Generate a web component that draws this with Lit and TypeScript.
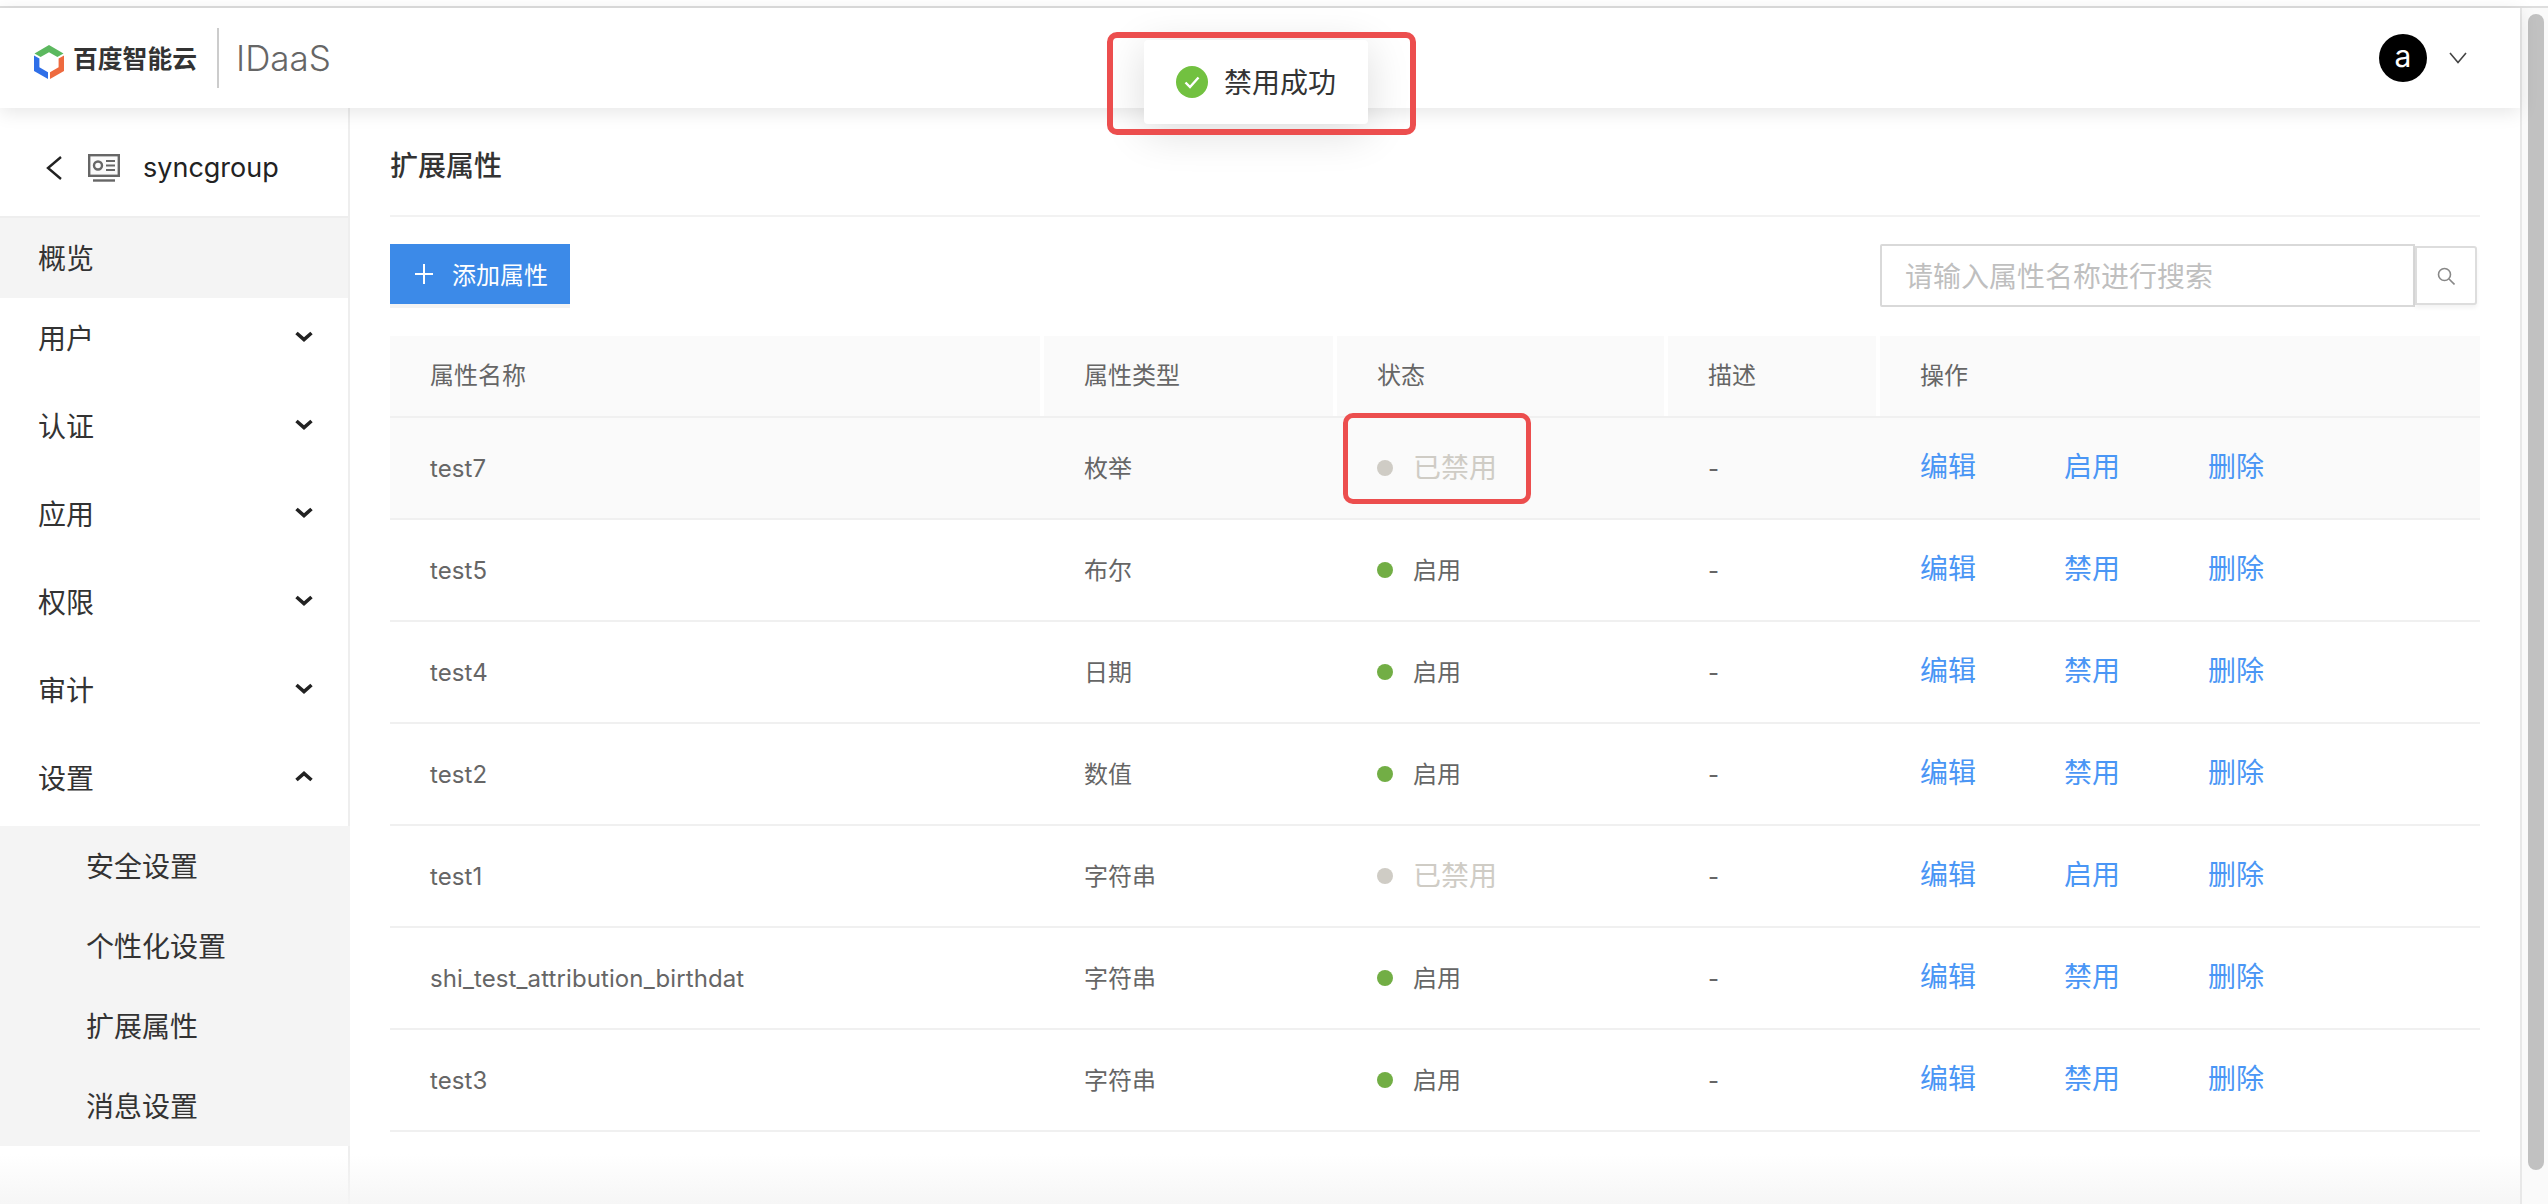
import { LitElement, css, html, svg } from 'lit';
import { customElement } from 'lit/decorators.js';

interface AttrRow {
  name: string;
  type: string;
  enabled: boolean;
}

const ROWS: AttrRow[] = [
  { name: 'test7', type: '枚举', enabled: false },
  { name: 'test5', type: '布尔', enabled: true },
  { name: 'test4', type: '日期', enabled: true },
  { name: 'test2', type: '数值', enabled: true },
  { name: 'test1', type: '字符串', enabled: false },
  { name: 'shi_test_attribution_birthdat', type: '字符串', enabled: true },
  { name: 'test3', type: '字符串', enabled: true }
];

const MENU = ['用户', '认证', '应用', '权限', '审计'];
const SUB_MENU = ['安全设置', '个性化设置', '扩展属性', '消息设置'];

const chevron = (up: boolean) => html`
  <svg class="menu-chevron" viewBox="0 0 18 11" width="18" height="11">
    <path d=${up ? 'M1.5 9L9 2.5L16.5 9' : 'M1.5 2L9 8.5L16.5 2'} fill="none" stroke="#222" stroke-width="3.6" />
  </svg>
`;

const logoMark = svg`
  <path d="M15 0L29.5 8.4L23.4 12L15 7.2L6.6 12L.5 8.4Z" fill="#5cb85f" />
  <path d="M0 10.4L5.4 13.4V22.2L14 27.2V34L0 26Z" fill="#2f6fe8" />
  <path d="M30 10.4L24.6 13.4V22.2L16 27.2V34L30 26Z" fill="#ee6a3f" />
`;

@customElement('app-root')
export class AppRoot extends LitElement {
  public static override styles = css`
    :host {
      display: block;
      position: relative;
      height: 1204px;
      overflow: hidden;
      background: #fff;
      color: #333;
      font-family: Inter, 'Noto Sans CJK SC', sans-serif;
    }

    .top-strip {
      height: 6px;
      border-bottom: 2px solid #dedede;
      background: #fff;
    }

    .page {
      display: flex;
      height: 1196px;
    }

    .window {
      flex: 1;
      min-width: 0;
      display: flex;
      flex-direction: column;
    }

    .scrollbar {
      flex: none;
      width: 28px;
      box-sizing: border-box;
      padding: 6px 4px 0 6px;
      border-left: 2px solid #e8e8e8;
      background: #fafafa;
    }

    .scrollbar-thumb {
      height: 1156px;
      border-radius: 8px;
      background: #c1c1c1;
    }

    .header {
      position: relative;
      z-index: 2;
      flex: none;
      height: 100px;
      display: flex;
      align-items: center;
      padding: 0 53px 0 34px;
      background: #fff;
      box-shadow: 0 4px 18px rgba(0, 0, 0, 0.1);
    }

    .logo-mark {
      flex: none;
      margin-top: 8px;
    }

    .logo-text {
      margin-left: 9px;
      padding-bottom: 3px;
      font-size: 24.8px;
      font-weight: 700;
      color: #333;
      white-space: nowrap;
    }

    .logo-divider {
      width: 2px;
      height: 60px;
      margin: 0 17px 0 20px;
      background: #ccc;
    }

    .product {
      font-size: 35px;
      font-weight: 300;
      color: #666;
    }

    .spacer {
      flex: 1;
    }

    .avatar {
      width: 48px;
      height: 48px;
      border-radius: 50%;
      background: #000;
      color: #fff;
      font-size: 30px;
      line-height: 44px;
      text-align: center;
    }

    .user-chevron {
      margin-left: 22px;
    }

    .body {
      flex: 1;
      min-height: 0;
      display: flex;
    }

    .sidebar {
      flex: none;
      width: 348px;
      border-right: 2px solid #eee;
    }

    .side-head {
      height: 108px;
      box-sizing: content-box;
      display: flex;
      align-items: center;
      padding-left: 46px;
      border-bottom: 2px solid #eee;
      font-size: 27px;
      color: #222;
    }

    .side-head svg {
      margin-top: 12px;
    }

    .side-head .card {
      margin-left: 26px;
    }

    .side-head span {
      margin-left: 23px;
      margin-top: 10px;
    }

    .menu-item {
      height: 80px;
      box-sizing: border-box;
      display: flex;
      align-items: center;
      justify-content: space-between;
      padding: 0 35px 3px 38px;
      margin-bottom: 8px;
      font-size: 28px;
      color: #333;
    }

    .menu-item.active {
      margin-bottom: 0;
      background: #f4f4f4;
    }

    .sub-menu {
      width: 350px;
      background: #f4f4f4;
    }

    .sub-item {
      height: 80px;
      box-sizing: border-box;
      display: flex;
      align-items: center;
      padding: 0 0 3px 86px;
      font-size: 28px;
      color: #333;
    }

    .main {
      flex: 1;
      min-width: 0;
      padding: 0 40px;
    }

    .title {
      height: 107px;
      box-sizing: content-box;
      display: flex;
      align-items: center;
      border-bottom: 2px solid #f2f2f2;
      font-size: 28px;
      font-weight: 500;
      color: #333;
    }

    .title span {
      margin-top: 5px;
    }

    .toolbar {
      height: 92px;
      margin-top: 27px;
      display: flex;
      align-items: flex-start;
      justify-content: space-between;
    }

    .add-btn {
      width: 180px;
      height: 60px;
      display: flex;
      align-items: center;
      gap: 19px;
      padding: 0 0 1px 25px;
      box-sizing: border-box;
      border: 0;
      background: #3c8ae8;
      box-shadow: 0 4px 0 #f3f3f3;
      color: #fff;
      font-family: inherit;
      font-size: 24px;
    }

    .add-btn svg {
      margin-top: 1px;
    }

    .search {
      display: flex;
      align-items: center;
      margin-right: 3px;
    }

    .search input {
      width: 535px;
      height: 63px;
      box-sizing: border-box;
      padding: 2px 23px 0;
      border: 2px solid #d9d9d9;
      border-radius: 2px 0 0 2px;
      outline: none;
      font-family: inherit;
      font-size: 28px;
      color: #333;
    }

    .search input::placeholder {
      color: #bfbfbf;
      opacity: 1;
    }

    .search-btn {
      width: 62px;
      height: 59px;
      display: flex;
      align-items: center;
      justify-content: center;
      padding: 0;
      box-sizing: border-box;
      border: 2px solid #ddd;
      border-radius: 0 3px 3px 0;
      background: #fff;
      box-shadow: 0 3px 4px rgba(0, 0, 0, 0.05);
    }

    table {
      width: 100%;
      table-layout: fixed;
      border-collapse: separate;
      border-spacing: 0;
    }

    .c-name {
      width: 654px;
    }
    .c-type {
      width: 293px;
    }
    .c-status {
      width: 331px;
    }
    .c-desc {
      width: 212px;
    }

    th {
      height: 82px;
      box-sizing: border-box;
      padding: 0 0 5px 40px;
      border-bottom: 2px solid #f0f0f0;
      background: #fafafa;
      box-shadow: inset -4px 0 0 #fff;
      font-size: 24px;
      font-weight: 400;
      color: #666;
      text-align: left;
    }

    th:last-child {
      box-shadow: none;
    }

    td {
      height: 102px;
      box-sizing: border-box;
      padding: 0 0 0 40px;
      border-bottom: 2px solid #f0f0f0;
      font-size: 24px;
      color: #666;
    }

    td.name {
      letter-spacing: 0.1px;
    }

    td.type {
      padding-bottom: 3px;
    }

    tr.muted td {
      background: #fafafa;
    }

    .status {
      display: flex;
      align-items: center;
      gap: 20px;
      margin-top: -4px;
    }

    .dot {
      flex: none;
      width: 16px;
      height: 16px;
      margin-top: 4px;
      border-radius: 50%;
      background: #72ae45;
    }

    .status.off {
      font-size: 28px;
      color: #cfccc5;
    }

    .status.off .dot {
      background: #cfccc5;
    }

    .actions {
      display: flex;
      gap: 88px;
      margin-top: -6px;
      font-size: 28px;
      color: #4a96f5;
    }

    .fade {
      position: absolute;
      left: 0;
      right: 28px;
      bottom: 0;
      height: 50px;
      background: linear-gradient(rgba(245, 245, 245, 0), rgba(245, 245, 245, 0.9));
      pointer-events: none;
    }

    .toast {
      position: absolute;
      z-index: 3;
      left: 1144px;
      top: 40px;
      width: 224px;
      height: 84px;
      box-sizing: border-box;
      display: flex;
      align-items: center;
      gap: 16px;
      padding: 0 0 3px 32px;
      border-radius: 4px;
      background: #fff;
      box-shadow: 0 8px 44px rgba(0, 0, 0, 0.14);
      font-size: 28px;
      color: #333;
    }

    .toast svg {
      margin-top: 3px;
    }

    .mark {
      position: absolute;
      z-index: 4;
      box-sizing: border-box;
      border: 6px solid #ec4e4e;
      border-radius: 10px;
    }

    .mark-toast {
      left: 1107px;
      top: 32px;
      width: 309px;
      height: 103px;
    }

    .mark-status {
      left: 1343px;
      top: 413px;
      width: 188px;
      height: 91px;
      border-width: 5px;
    }
  `;

  private renderRow(row: AttrRow, index: number) {
    return html`
      <tr class=${index === 0 ? 'muted' : ''}>
        <td class="name">${row.name}</td>
        <td class="type">${row.type}</td>
        <td>
          <div class="status ${row.enabled ? '' : 'off'}">
            <i class="dot"></i>${row.enabled ? '启用' : '已禁用'}
          </div>
        </td>
        <td>-</td>
        <td>
          <div class="actions">
            <span>编辑</span><span>${row.enabled ? '禁用' : '启用'}</span><span>删除</span>
          </div>
        </td>
      </tr>
    `;
  }

  public override render() {
    return html`
      <div class="top-strip"></div>
      <div class="page">
        <div class="window">
          <header class="header">
            <svg class="logo-mark" viewBox="0 0 30 34" width="30" height="34">${logoMark}</svg>
            <span class="logo-text">百度智能云</span>
            <i class="logo-divider"></i>
            <span class="product">IDaaS</span>
            <div class="spacer"></div>
            <div class="avatar">a</div>
            <svg class="user-chevron" viewBox="0 0 18 12" width="18" height="12">
              <path d="M1 1L9 10.5L17 1" fill="none" stroke="#444" stroke-width="1.6" />
            </svg>
          </header>
          <div class="body">
            <aside class="sidebar">
              <div class="side-head">
                <svg viewBox="0 0 16 24" width="16" height="24">
                  <path d="M15 1L2 12L15 23" fill="none" stroke="#222" stroke-width="2.4" />
                </svg>
                <svg class="card" viewBox="0 0 32 28" width="32" height="28">
                  <rect x="1.2" y="1.2" width="29.6" height="20.6" fill="#fafafa" stroke="#666" stroke-width="2.4" />
                  <circle cx="10" cy="11.5" r="4" fill="none" stroke="#666" stroke-width="2.4" />
                  <path d="M18 7H27M18 11.5H27M18 16H27" stroke="#666" stroke-width="2.2" />
                  <path d="M5 26.5H27" stroke="#666" stroke-width="2.4" />
                </svg>
                <span>syncgroup</span>
              </div>
              <div class="menu-item active">概览</div>
              ${MENU.map(item => html`<div class="menu-item">${item}${chevron(false)}</div>`)}
              <div class="menu-item">设置${chevron(true)}</div>
              <div class="sub-menu">
                ${SUB_MENU.map(item => html`<div class="sub-item">${item}</div>`)}
              </div>
            </aside>
            <main class="main">
              <div class="title"><span>扩展属性</span></div>
              <div class="toolbar">
                <button class="add-btn">
                  <svg viewBox="0 0 18 20" width="18" height="20">
                    <path d="M9 0V20M0 10H18" stroke="#fff" stroke-width="2" />
                  </svg>
                  添加属性
                </button>
                <div class="search">
                  <input placeholder="请输入属性名称进行搜索" />
                  <button class="search-btn">
                    <svg viewBox="0 0 18 18" width="18" height="18">
                      <circle cx="7.5" cy="7.5" r="6" fill="none" stroke="#888" stroke-width="1.6" />
                      <path d="M12 12L17.5 17.5" stroke="#888" stroke-width="1.6" />
                    </svg>
                  </button>
                </div>
              </div>
              <table>
                <thead>
                  <tr>
                    <th class="c-name">属性名称</th>
                    <th class="c-type">属性类型</th>
                    <th class="c-status">状态</th>
                    <th class="c-desc">描述</th>
                    <th>操作</th>
                  </tr>
                </thead>
                <tbody>${ROWS.map((row, index) => this.renderRow(row, index))}</tbody>
              </table>
            </main>
          </div>
        </div>
        <div class="scrollbar"><div class="scrollbar-thumb"></div></div>
      </div>
      <div class="fade"></div>
      <div class="toast">
        <svg viewBox="0 0 32 32" width="32" height="32">
          <circle cx="16" cy="16" r="16" fill="#72c140" />
          <path d="M9.5 16.5L14 21L22.5 11.5" fill="none" stroke="#fff" stroke-width="2.4" />
        </svg>
        禁用成功
      </div>
      <div class="mark mark-toast"></div>
      <div class="mark mark-status"></div>
    `;
  }
}
